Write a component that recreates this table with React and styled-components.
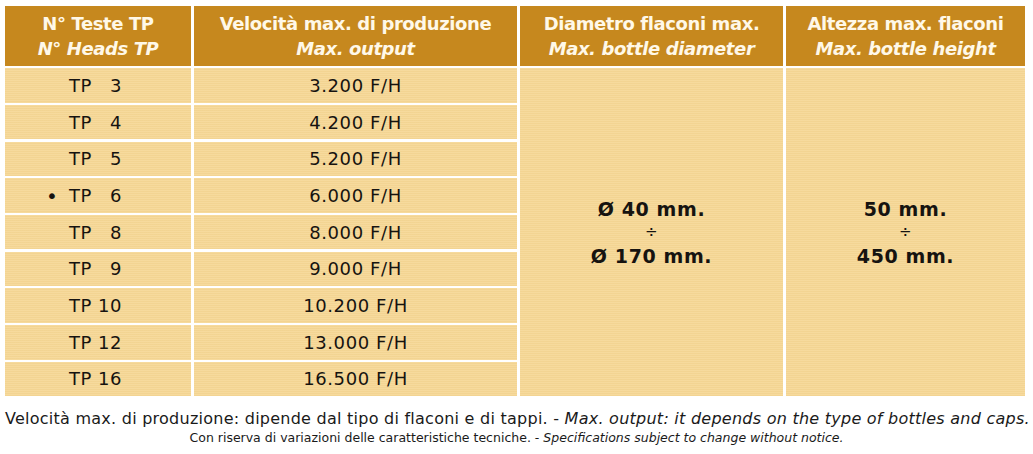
import React from "react";
import styled, { createGlobalStyle } from "styled-components";

const Global = createGlobalStyle`
  html, body { margin: 0; padding: 0; background: #fff; }
  body { font-family: "DejaVu Sans", "Liberation Sans", sans-serif; }
`;

const Page = styled.div`
  width: 1033px;
  height: 454px;
  padding: 6px 8px 0 5px;
  box-sizing: border-box;
  background: #fff;
`;

const Table = styled.div`
  display: grid;
  grid-template-columns: 186px 323px 263px 239px;
  grid-template-rows: 60px repeat(9, 34.4px);
  column-gap: 3px;
  row-gap: 2.3px;
  width: 1020px;
`;

const HeadCell = styled.div`
  background: #c6881e;
  color: #fff8e8;
  display: flex;
  flex-direction: column;
  align-items: center;
  justify-content: center;
  font-weight: 700;
  font-size: 18px;
  line-height: 25px;
  letter-spacing: -0.4px;
`;

const HeadItalic = styled.span`
  font-style: italic;
`;

const BodyCell = styled.div`
  background: #f6d897 repeating-linear-gradient(
    to bottom,
    rgba(255, 255, 255, 0.06) 0px,
    rgba(255, 255, 255, 0.06) 1px,
    rgba(180, 140, 60, 0.05) 1px,
    rgba(180, 140, 60, 0.05) 2px
  );
  color: #161310;
  font-size: 18px;
  letter-spacing: 0.6px;
  display: flex;
  align-items: center;
  justify-content: ${(p) => (p.$left ? "flex-start" : "center")};
  padding-left: ${(p) => (p.$left ? "40px" : "0")};
`;

const MergedCell = styled(BodyCell)`
  grid-row: 2 / span 9;
  flex-direction: column;
  font-weight: 700;
  font-size: 19px;
  letter-spacing: 0.6px;
  line-height: 24px;
`;

const Marker = styled.span`
  display: inline-block;
  width: 24px;
  padding-left: 1px;
  box-sizing: border-box;
  text-align: left;
  font-size: 20px;
`;

const Prefix = styled.span``;

const Num = styled.span`
  display: inline-block;
  width: 30px;
  text-align: right;
`;

const Divide = styled.span`
  font-weight: 400;
  font-size: 15px;
  line-height: 23px;
`;

const Footer = styled.div`
  text-align: center;
  color: #1a1a1a;
  margin-top: 12px;
  width: 1023px;
`;

const FootMain = styled.div`
  font-size: 16px;
  line-height: 21px;
  white-space: nowrap;
  letter-spacing: 0.25px;
`;

const FootSmall = styled.div`
  font-size: 12.5px;
  line-height: 17px;
  white-space: nowrap;
  letter-spacing: 0;
`;

const rows = [
  ["3", "3.200"],
  ["4", "4.200"],
  ["5", "5.200"],
  ["6", "6.000", true],
  ["8", "8.000"],
  ["9", "9.000"],
  ["10", "10.200"],
  ["12", "13.000"],
  ["16", "16.500"],
];

export default function App() {
  return (
    <Page>
      <Global />
      <Table>
        <HeadCell>
          <span>N° Teste TP</span>
          <HeadItalic>N° Heads TP</HeadItalic>
        </HeadCell>
        <HeadCell>
          <span>Velocità max. di produzione</span>
          <HeadItalic>Max. output</HeadItalic>
        </HeadCell>
        <HeadCell>
          <span>Diametro flaconi max.</span>
          <HeadItalic>Max. bottle diameter</HeadItalic>
        </HeadCell>
        <HeadCell>
          <span>Altezza max. flaconi</span>
          <HeadItalic>Max. bottle height</HeadItalic>
        </HeadCell>
        {rows.map(([n, v, mark], i) => (
          <React.Fragment key={n}>
            <BodyCell $left style={{ gridRow: i + 2, gridColumn: 1 }}>
              <Marker>{mark ? "•" : ""}</Marker>
              <Prefix>TP</Prefix>
              <Num>{n}</Num>
            </BodyCell>
            <BodyCell style={{ gridRow: i + 2, gridColumn: 2 }}>{v} F/H</BodyCell>
          </React.Fragment>
        ))}
        <MergedCell style={{ gridColumn: 3 }}>
          <span>Ø 40 mm.</span>
          <Divide>÷</Divide>
          <span>Ø 170 mm.</span>
        </MergedCell>
        <MergedCell style={{ gridColumn: 4 }}>
          <span>50 mm.</span>
          <Divide>÷</Divide>
          <span>450 mm.</span>
        </MergedCell>
      </Table>
      <Footer>
        <FootMain>
          Velocità max. di produzione: dipende dal tipo di flaconi e di tappi. -{" "}
          <i>Max. output: it depends on the type of bottles and caps.</i>
        </FootMain>
        <FootSmall>
          Con riserva di variazioni delle caratteristiche tecniche. -{" "}
          <i>Specifications subject to change without notice.</i>
        </FootSmall>
      </Footer>
    </Page>
  );
}
